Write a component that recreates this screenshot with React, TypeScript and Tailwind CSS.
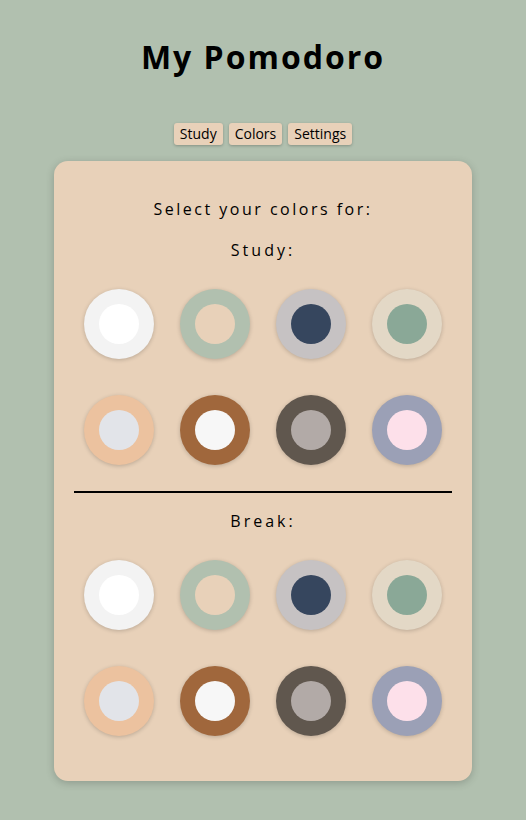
const palette = [
  { outer: "#f3f3f3", inner: "#ffffff" },
  { outer: "#b1c0af", inner: "#e8d1b9" },
  { outer: "#c6c2c3", inner: "#36465e" },
  { outer: "#e3d8c6", inner: "#8aa897" },
  { outer: "#ecc29f", inner: "#e2e4e9" },
  { outer: "#a0673c", inner: "#f7f7f7" },
  { outer: "#60574e", inner: "#b2aaa7" },
  { outer: "#9ba0b6", inner: "#fde0ea" },
];

function Swatches() {
  return (
    <div className="grid grid-cols-4 gap-x-[26px] gap-y-[36px]">
      {palette.map((c, i) => (
        <button
          key={i}
          className="flex h-[70px] w-[70px] items-center justify-center rounded-full shadow-[0_1px_4px_rgba(0,0,0,0.2)]"
          style={{ backgroundColor: c.outer }}
        >
          <span
            className="block h-[40px] w-[40px] rounded-full"
            style={{ backgroundColor: c.inner }}
          />
        </button>
      ))}
    </div>
  );
}

export default function App() {
  return (
    <div
      className="min-h-[820px] bg-[#b1c0af] text-black"
      style={{ fontFamily: '"Open Sans", sans-serif' }}
    >
      <h1 className="pt-[37px] text-center text-[32px] font-bold leading-[40px] tracking-[2px]">
        My Pomodoro
      </h1>

      <nav className="mt-[46px] flex justify-center gap-[6px]">
        {["Study", "Colors", "Settings"].map((label) => (
          <button
            key={label}
            className="h-[22px] rounded-[3px] bg-[#e8d1b9] px-[6px] text-[14px] leading-[22px] shadow-[0_1px_3px_rgba(0,0,0,0.25)]"
          >
            {label}
          </button>
        ))}
      </nav>

      <div className="mx-auto mt-[16px] w-[418px] rounded-[14px] bg-[#e8d1b9] px-[30px] pb-[45px] pt-[36px] shadow-[0_2px_8px_rgba(0,0,0,0.2)]">
        <p className="text-center text-[16px] leading-[24px] tracking-[2.5px]">
          Select your colors for:
        </p>
        <p className="mt-[17px] text-center text-[16px] leading-[24px] tracking-[3px]">
          Study:
        </p>
        <div className="mt-[27px]">
          <Swatches />
        </div>

        <hr className="mx-[-10px] mt-[26px] border-t-2 border-black" />

        <p className="mt-[16px] text-center text-[16px] leading-[24px] tracking-[3px]">
          Break:
        </p>
        <div className="mt-[27px]">
          <Swatches />
        </div>
      </div>
    </div>
  );
}
